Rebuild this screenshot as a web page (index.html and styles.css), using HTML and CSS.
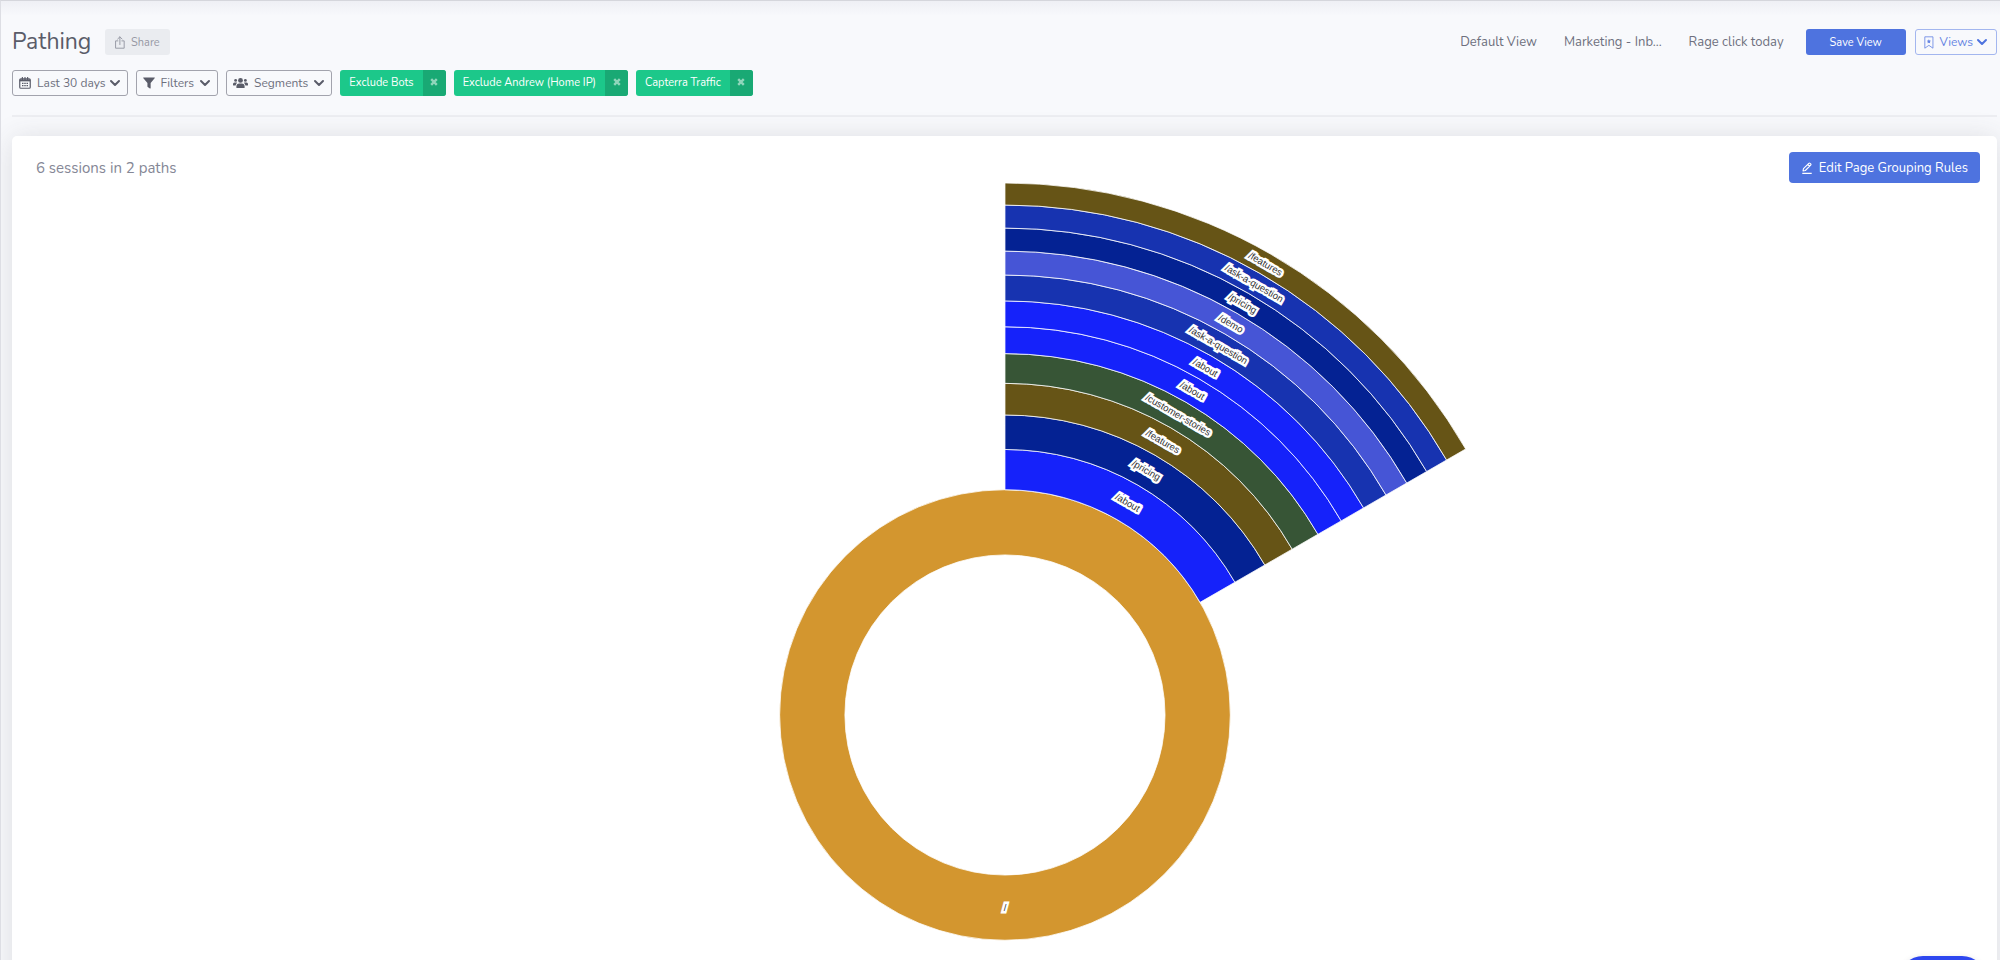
FILE: index.html
```
<!DOCTYPE html>
<html lang="en">
<head>
  <meta charset="UTF-8" />
  <meta name="viewport" content="width=device-width, initial-scale=1.0" />
  <title>Pathing</title>
  <link rel="stylesheet" href="styles.css">
</head>
<body>
  <header class="topbar">
    <h1>Pathing</h1>
    <button class="btn btn-share">
      <svg class="icon" viewBox="2 0 12 16" fill="none" stroke="currentColor" stroke-width="1.2" stroke-linecap="round" stroke-linejoin="round"><path d="M5.5 6H2.700v9h10.600V6h-2.800M8 10.500V1.200M5.300 3.700 8 1l2.700 2.700"/></svg>
      Share
    </button>
    <nav class="saved-views">
      <a href="#">Default View</a>
      <a href="#">Marketing - Inb...</a>
      <a href="#">Rage click today</a>
    </nav>
    <button class="btn btn-primary">Save View</button>
    <button class="btn btn-views">
      <svg class="icon" viewBox="2 0 12 16" fill="none" stroke="currentColor" stroke-linejoin="round"><path d="M3 1h10v14l-5-3.500L3 15z"/><path fill="currentColor" stroke="none" d="m8 4 .8 1.600 1.800.3-1.300 1.300.3 1.800L8 8.200 6.400 9l.3-1.800-1.300-1.300 1.800-.3z"/></svg>
      Views
      <svg class="chevron" viewBox="0 0 12 12" fill="none" stroke="currentColor" stroke-width="2" stroke-linecap="round" stroke-linejoin="round"><path d="m2 4 4 4 4-4"/></svg>
    </button>
  </header>

  <div class="filters">
    <button class="btn btn-filter">
      <svg class="icon" viewBox="0 0 16 16" fill="none" stroke="currentColor"><rect x="1" y="2.500" width="14" height="12.500" rx="1.500" stroke-width="1.600"/><path d="M1 4.500h14" stroke-width="2.600"/><path d="M4.500 0v4M8 0v4M11.500 0v4" stroke-width="1.500"/><path d="M4 8.500h8M4 11.500h8" stroke-width="1.700" stroke-dasharray="2 1"/></svg>
      Last 30 days
      <svg class="chevron" viewBox="0 0 12 12" fill="none" stroke="currentColor" stroke-width="2" stroke-linecap="round" stroke-linejoin="round"><path d="m2 4 4 4 4-4"/></svg>
    </button>
    <button class="btn btn-filter">
      <svg class="icon" viewBox="0 0 16 16" fill="currentColor"><path d="M1 .5h14a.7.7 0 0 1 .5 1.200L10.200 8v6.800a.6.6 0 0 1-1 .5l-2.900-2a1 1 0 0 1-.4-.8V8L.5 1.700A.7.700 0 0 1 1 .5z"/></svg>
      Filters
      <svg class="chevron spaced" viewBox="0 0 12 12" fill="none" stroke="currentColor" stroke-width="2" stroke-linecap="round" stroke-linejoin="round"><path d="m2 4 4 4 4-4"/></svg>
    </button>
    <button class="btn btn-filter">
      <svg class="icon" viewBox="0 0 20 16" fill="currentColor"><circle cx="10" cy="4.500" r="3.200"/><circle cx="3.500" cy="4.500" r="1.900"/><circle cx="16.500" cy="4.500" r="1.900"/><path d="M4.500 14v-1.500a4 4 0 0 1 4-4h3a4 4 0 0 1 4 4V14a.8.800 0 0 1-.8.800H5.300a.8.800 0 0 1-.8-.8zM0 10.500V9.300a2 2 0 0 1 2-2h2.500a2 2 0 0 1 1 .3 6 6 0 0 0-2 3.600H.8a.8.800 0 0 1-.8-.7zM20 10.500V9.300a2 2 0 0 0-2-2h-2.500a2 2 0 0 0-1 .3 6 6 0 0 1 2 3.600h2.700a.8.800 0 0 0 .8-.7z"/></svg>
      Segments
      <svg class="chevron spaced" viewBox="0 0 12 12" fill="none" stroke="currentColor" stroke-width="2" stroke-linecap="round" stroke-linejoin="round"><path d="m2 4 4 4 4-4"/></svg>
    </button>
    <div class="tag">
      <span>Exclude Bots</span>
      <button aria-label="Remove Exclude Bots"><svg viewBox="0 0 10 10" stroke="currentColor" stroke-width="3"><path d="m1.500 1.500 7 7M8.500 1.500l-7 7"/></svg></button>
    </div>
    <div class="tag">
      <span>Exclude Andrew (Home IP)</span>
      <button aria-label="Remove Exclude Andrew (Home IP)"><svg viewBox="0 0 10 10" stroke="currentColor" stroke-width="3"><path d="m1.500 1.500 7 7M8.500 1.500l-7 7"/></svg></button>
    </div>
    <div class="tag">
      <span>Capterra Traffic</span>
      <button aria-label="Remove Capterra Traffic"><svg viewBox="0 0 10 10" stroke="currentColor" stroke-width="3"><path d="m1.500 1.500 7 7M8.500 1.500l-7 7"/></svg></button>
    </div>
  </div>

  <main class="card">
    <div class="card-head">
      <p>6 sessions in 2 paths</p>
      <button class="btn btn-edit">
        <svg class="icon" viewBox="0 0 14 14" fill="none" stroke="currentColor" stroke-width="1.300" stroke-linejoin="round"><path d="M1.500 13.300h11M2.300 10.500l.6-2.800 6.200-6.200a1 1 0 0 1 1.400 0l.8.8a1 1 0 0 1 0 1.400L5.100 9.900zM7.800 2.800l2.200 2.200"/></svg>
        Edit Page Grouping Rules
      </button>
    </div>
    <svg class="sunburst" id="sunburst" viewBox="-555 -555 1110 1110"></svg>
  </main>

  <button class="chat-launcher" aria-label="Open chat"></button>

  <script>
    // one ring per step, from the landing page outwards
    const rings = [
      { page: '/', inner: 167, outer: 235, sweep: 360, color: '#d3962f' },
      { page: '/about', inner: 235, outer: 277, sweep: 60, color: '#1522fa' },
      { page: '/pricing', inner: 277, outer: 313, sweep: 60, color: '#042293' },
      { page: '/features', inner: 313, outer: 346, sweep: 60, color: '#665416' },
      { page: '/customer-stories', inner: 346, outer: 377, sweep: 60, color: '#375536' },
      { page: '/about', inner: 377, outer: 405, sweep: 60, color: '#1522fa' },
      { page: '/about', inner: 405, outer: 432, sweep: 60, color: '#1522fa' },
      { page: '/ask-a-question', inner: 432, outer: 459, sweep: 60, color: '#1733b0' },
      { page: '/demo', inner: 459, outer: 484, sweep: 60, color: '#4655d6' },
      { page: '/pricing', inner: 484, outer: 508, sweep: 60, color: '#042293' },
      { page: '/ask-a-question', inner: 508, outer: 532, sweep: 60, color: '#1733b0' },
      { page: '/features', inner: 532, outer: 555, sweep: 60, color: '#665416' }
    ];

    const chart = document.getElementById('sunburst');

    function add(tag, attrs) {
      const el = document.createElementNS('http://www.w3.org/2000/svg', tag);
      for (const key in attrs) el.setAttribute(key, attrs[key]);
      chart.appendChild(el);
      return el;
    }

    function point(radius, degrees) {
      const a = degrees * Math.PI / 180;
      return (radius * Math.sin(a)).toFixed(2) + ' ' + (-radius * Math.cos(a)).toFixed(2);
    }

    function circlePath(r) {
      return `M0 ${-r}A${r} ${r} 0 1 1 0 ${r}A${r} ${r} 0 1 1 0 ${-r}Z`;
    }

    function arcPath(ring) {
      if (ring.sweep === 360) return circlePath(ring.outer) + circlePath(ring.inner);
      return `M${point(ring.inner, 0)}L${point(ring.outer, 0)}` +
        `A${ring.outer} ${ring.outer} 0 0 1 ${point(ring.outer, ring.sweep)}` +
        `L${point(ring.inner, ring.sweep)}A${ring.inner} ${ring.inner} 0 0 0 ${point(ring.inner, 0)}Z`;
    }

    rings.forEach(ring => add('path', { class: 'arc', d: arcPath(ring), fill: ring.color }));

    rings.forEach(ring => {
      const mid = ring.sweep / 2;
      const [x, y] = point((ring.inner + ring.outer) / 2, mid).split(' ');
      const turn = mid > 90 ? mid - 180 : mid;
      const label = add('text', { class: 'arc-label', dy: '0.35em', transform: `translate(${x} ${y}) rotate(${turn})` });
      label.textContent = ring.page;
    });
  </script>
</body>
</html>
```
FILE: styles.css
```
* {
  margin: 0;
  padding: 0;
  box-sizing: border-box;
}
body {
  height: 100vh;
  overflow: hidden;
  padding: 28px 3px 0 11px;
  border-top: 1px solid #d5d6dc;
  border-left: 1px solid #dddee4;
  background: linear-gradient(#eeeff4, #f8f9fc 16px);
  color: #6e707e;
  font-family: Nunito, Lato, sans-serif;
  font-size: 13px;
}
button {
  font: inherit;
  cursor: pointer;
}
.topbar, .filters, .card-head {
  display: flex;
  align-items: center;
}
.topbar {
  gap: 9px;
}
h1 {
  margin-right: 5px;
  color: #5a5c69;
  font-size: 23px;
  font-weight: 400;
  line-height: 26px;
}
.btn {
  display: flex;
  align-items: center;
  justify-content: center;
  height: 26px;
  border: 1px solid transparent;
  border-radius: 3px;
  font-size: 12px;
  white-space: nowrap;
}
.icon {
  height: 12px;
  margin-right: 6px;
}
.chevron {
  width: 12px;
  height: 12px;
  margin-left: 3px;
}
.chevron.spaced {
  margin-left: 5px;
}
.btn-share {
  padding: 0 9px;
  background: #eaecf0;
  color: #9799a5;
  font-size: 11px;
}
.btn-share .icon, .btn-views .icon {
  height: 13px;
}
.saved-views {
  display: flex;
  gap: 27px;
  margin-left: auto;
  margin-right: 13px;
}
.saved-views a {
  color: #6e707e;
  text-decoration: none;
}
.btn-primary {
  padding: 0 23px;
  background: #4e73df;
  color: #fff;
  font-size: 11px;
}
.btn-views {
  padding: 0 8px;
  border-color: #a3b6ef;
  background: none;
  color: #6584e3;
}
.btn-views .chevron {
  color: #4e73df;
}
.filters {
  gap: 8px;
  margin-top: 15px;
  padding-bottom: 19px;
  border-bottom: 2px solid #edeef2;
}
.btn-filter {
  padding: 0 6px;
  border-color: #a2a3ad;
  background: none;
  color: #6e707e;
}
.btn-filter svg {
  color: #5a5c69;
}
.tag {
  display: flex;
  height: 26px;
  overflow: hidden;
  border-radius: 3px;
  background: #1cc88a;
  color: #fff;
  font-size: 11px;
  line-height: 26px;
}
.tag span {
  padding: 0 9px;
}
.tag button {
  width: 23px;
  border: 0;
  background: #19a974;
  color: #8fd6bb;
}
.tag svg {
  width: 8px;
  height: 8px;
}
.card {
  margin-top: 19px;
  padding: 16px 0 24px;
  border-radius: 5px;
  background: #fff;
  box-shadow: 0 2px 28px rgba(58, 59, 69, 0.15);
}
.card-head {
  justify-content: space-between;
  padding: 0 17px 0 24px;
  color: #858796;
  font-size: 15px;
}
.btn-edit {
  height: 31px;
  padding: 0 11px;
  border-radius: 4px;
  background: #4e73df;
  color: #fff;
  font-size: 13px;
}
.sunburst {
  display: block;
  width: 53.6%;
  margin: 0 auto;
  overflow: visible;
}
.arc {
  stroke: rgba(255, 255, 255, 0.8);
  stroke-width: 1;
  fill-rule: evenodd;
}
.arc-label {
  fill: #333;
  stroke: #fff;
  stroke-width: 5;
  paint-order: stroke;
  font-family: Arial, "Liberation Sans", sans-serif;
  font-size: 10px;
  text-anchor: middle;
}
.chat-launcher {
  position: fixed;
  right: 14px;
  bottom: -44px;
  width: 87px;
  height: 48px;
  border: 0;
  border-radius: 24px;
  background: #2e47ef;
  box-shadow: 0 1px 6px rgba(0, 0, 0, 0.1);
}
```
